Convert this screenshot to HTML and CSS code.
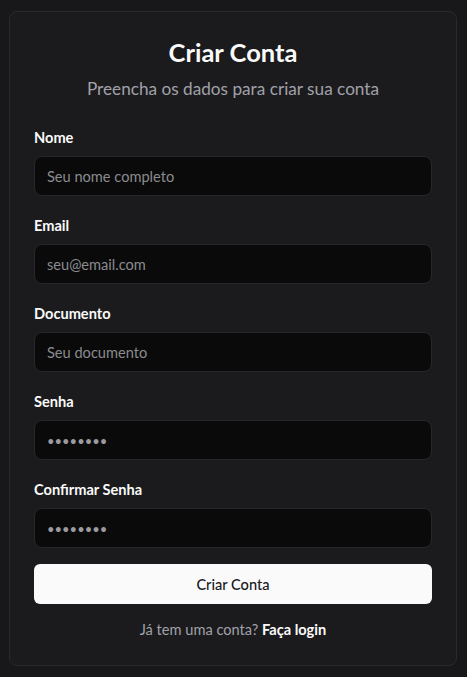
FILE: index.html
```html
<!DOCTYPE html>
<html lang="pt-BR">
<head>
<meta charset="utf-8">
<title>Criar Conta</title>
<link rel="stylesheet" href="styles.css">
</head>
<body>
<main class="page">
  <section class="card">
    <header class="card-header">
      <h1 class="title">Criar Conta</h1>
      <p class="subtitle">Preencha os dados para criar sua conta</p>
    </header>
    <form class="form">
      <div class="field">
        <label class="label" for="nome">Nome</label>
        <input class="input" id="nome" type="text" placeholder="Seu nome completo">
      </div>
      <div class="field">
        <label class="label" for="email">Email</label>
        <input class="input" id="email" type="email" placeholder="seu@email.com">
      </div>
      <div class="field">
        <label class="label" for="doc">Documento</label>
        <input class="input" id="doc" type="text" placeholder="Seu documento">
      </div>
      <div class="field">
        <label class="label" for="senha">Senha</label>
        <input class="input input-pass" id="senha" type="text" placeholder="••••••••">
      </div>
      <div class="field">
        <label class="label" for="conf">Confirmar Senha</label>
        <input class="input input-pass" id="conf" type="text" placeholder="••••••••">
      </div>
      <button class="button" type="button">Criar Conta</button>
    </form>
    <p class="footer">Já tem uma conta? <a class="link" href="#">Faça login</a></p>
  </section>
</main>
</body>
</html>
```

FILE: styles.css
```css
* { box-sizing: border-box; }
html, body { margin: 0; padding: 0; }
body {
  background: #18181b;
  font-family: "Lato", "Noto Sans", sans-serif;
  color: #fafafa;
}
.page {
  min-height: 677px;
  display: flex;
  align-items: center;
  justify-content: center;
  padding-right: 1px;
}
.card {
  width: 448px;
  background: #1b1b1d;
  border: 1px solid #2a2a2d;
  border-radius: 8px;
  padding: 24px 24px 25px;
}
.card-header {
  display: flex;
  flex-direction: column;
  align-items: center;
  gap: 9px;
  margin-bottom: 27px;
}
.title {
  margin: 0;
  font-size: 25.5px;
  line-height: 32px;
  font-weight: 700;
  color: #fafafa;
}
.subtitle {
  margin: 0;
  font-size: 17.2px;
  line-height: 24px;
  color: #a1a1aa;
}
.form {
  display: flex;
  flex-direction: column;
  gap: 20px;
}
.field {
  display: flex;
  flex-direction: column;
  gap: 8px;
}
.label {
  font-size: 14.6px;
  line-height: 20px;
  font-weight: 700;
  color: #fafafa;
}
.input {
  height: 40px;
  width: 100%;
  background: #0a0a0a;
  border: 1px solid #27272a;
  border-radius: 8px;
  padding: 0 12px;
  font-family: inherit;
  font-size: 14.6px;
  color: #fafafa;
  outline: none;
}
.input::placeholder { color: #8b8b90; }
.input-pass::placeholder { color: #9a9aa0; letter-spacing: 0; font-size: 13px; }
.button {
  margin-top: -4px;
  height: 40px;
  width: 100%;
  border: none;
  border-radius: 6px;
  background: #fafafa;
  color: #18181b;
  font-family: inherit;
  font-size: 14.6px;
  font-weight: 500;
}
.footer {
  margin: 16px 0 0;
  text-align: center;
  font-size: 14.6px;
  line-height: 20px;
  color: #a1a1aa;
}
.link {
  color: #fafafa;
  font-weight: 700;
  text-decoration: none;
}
```
